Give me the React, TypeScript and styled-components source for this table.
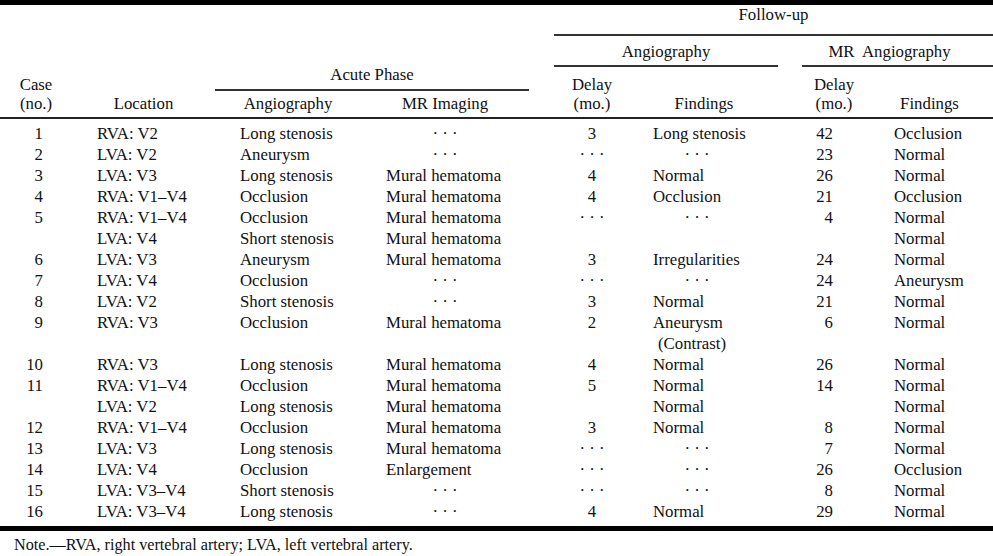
import styled, { createGlobalStyle } from "styled-components";

const COLS = "72px 143px 146px 168px 25px 76px 148px 24px 64px 127px";
const DOTS = "\u00B7 \u00B7 \u00B7";

const GlobalStyle = createGlobalStyle`
  body {
    margin: 0;
    background: #fff;
    color: #111;
    font-family: "Liberation Serif", "Times New Roman", serif;
    font-size: 16.8px;
  }
`;

type Line = {
  c?: string;
  loc?: string;
  aa?: string;
  mr?: string;
  fd?: string;
  ff?: string;
  md?: string;
  mf?: string;
  cont?: boolean;
};

const D = DOTS;

// one entry per printed line, second lines of a case have no case number
const lines: Line[] = [
  { c: "1", loc: "RVA: V2", aa: "Long stenosis", mr: D, fd: "3", ff: "Long stenosis", md: "42", mf: "Occlusion" },
  { c: "2", loc: "LVA: V2", aa: "Aneurysm", mr: D, fd: D, ff: D, md: "23", mf: "Normal" },
  { c: "3", loc: "LVA: V3", aa: "Long stenosis", mr: "Mural hematoma", fd: "4", ff: "Normal", md: "26", mf: "Normal" },
  { c: "4", loc: "RVA: V1–V4", aa: "Occlusion", mr: "Mural hematoma", fd: "4", ff: "Occlusion", md: "21", mf: "Occlusion" },
  { c: "5", loc: "RVA: V1–V4", aa: "Occlusion", mr: "Mural hematoma", fd: D, ff: D, md: "4", mf: "Normal" },
  { loc: "LVA: V4", aa: "Short stenosis", mr: "Mural hematoma", mf: "Normal" },
  { c: "6", loc: "LVA: V3", aa: "Aneurysm", mr: "Mural hematoma", fd: "3", ff: "Irregularities", md: "24", mf: "Normal" },
  { c: "7", loc: "LVA: V4", aa: "Occlusion", mr: D, fd: D, ff: D, md: "24", mf: "Aneurysm" },
  { c: "8", loc: "LVA: V2", aa: "Short stenosis", mr: D, fd: "3", ff: "Normal", md: "21", mf: "Normal" },
  { c: "9", loc: "RVA: V3", aa: "Occlusion", mr: "Mural hematoma", fd: "2", ff: "Aneurysm", md: "6", mf: "Normal" },
  { ff: "(Contrast)", cont: true },
  { c: "10", loc: "RVA: V3", aa: "Long stenosis", mr: "Mural hematoma", fd: "4", ff: "Normal", md: "26", mf: "Normal" },
  { c: "11", loc: "RVA: V1–V4", aa: "Occlusion", mr: "Mural hematoma", fd: "5", ff: "Normal", md: "14", mf: "Normal" },
  { loc: "LVA: V2", aa: "Long stenosis", mr: "Mural hematoma", ff: "Normal", mf: "Normal" },
  { c: "12", loc: "RVA: V1–V4", aa: "Occlusion", mr: "Mural hematoma", fd: "3", ff: "Normal", md: "8", mf: "Normal" },
  { c: "13", loc: "LVA: V3", aa: "Long stenosis", mr: "Mural hematoma", fd: D, ff: D, md: "7", mf: "Normal" },
  { c: "14", loc: "LVA: V4", aa: "Occlusion", mr: "Enlargement", fd: D, ff: D, md: "26", mf: "Occlusion" },
  { c: "15", loc: "LVA: V3–V4", aa: "Short stenosis", mr: D, fd: D, ff: D, md: "8", mf: "Normal" },
  { c: "16", loc: "LVA: V3–V4", aa: "Long stenosis", mr: D, fd: "4", ff: "Normal", md: "29", mf: "Normal" },
];

function App() {
  return (
    <>
      <GlobalStyle />
      <Table>
        <Head>
          <ColHead $col={1}>
            Case
            <br />
            (no.)
          </ColHead>
          <ColHead $col={2}>Location</ColHead>
          <Group $cols="3 / 5">
            <GroupTitle $pb={5}>Acute Phase</GroupTitle>
            <SubCols $tpl="146px 168px">
              <ColHead $pt={3}>Angiography</ColHead>
              <ColHead $pt={3}>MR Imaging</ColHead>
            </SubCols>
          </Group>
          <Group $cols="6 / 11">
            <GroupTitle $pb={10}>Follow-up</GroupTitle>
            <SubCols $tpl="224px 24px 191px">
              <Group>
                <GroupTitle $pt={6} $pb={4}>
                  Angiography
                </GroupTitle>
                <SubCols $tpl="76px 148px">
                  <ColHead $pt={8}>
                    Delay
                    <br />
                    (mo.)
                  </ColHead>
                  <ColHead $pt={8}>Findings</ColHead>
                </SubCols>
              </Group>
              <span />
              <Group>
                <GroupTitle $pt={6} $pb={4} $pr={16}>
                  MR&nbsp; Angiography
                </GroupTitle>
                <SubCols $tpl="64px 127px">
                  <ColHead $pt={8}>
                    Delay
                    <br />
                    (mo.)
                  </ColHead>
                  <ColHead $pt={8}>Findings</ColHead>
                </SubCols>
              </Group>
            </SubCols>
          </Group>
        </Head>
        <Body>
          {lines.map((l, i) => (
            <Row key={i}>
              <Cell $col={1} $align="right" $pr={29}>
                {l.c}
              </Cell>
              <Cell $col={2} $pl={25}>
                {l.loc}
              </Cell>
              <Cell $col={3} $pl={25}>
                {l.aa}
              </Cell>
              {l.mr === D ? (
                <Cell $col={4} $align="center">
                  {l.mr}
                </Cell>
              ) : (
                <Cell $col={4} $pl={25}>
                  {l.mr}
                </Cell>
              )}
              <Cell $col={6} $align="center">
                {l.fd}
              </Cell>
              {l.ff === D ? (
                <Cell $col={7} $align="center" $pr={14}>
                  {l.ff}
                </Cell>
              ) : (
                <Cell $col={7} $pl={l.cont ? 28 : 23}>
                  {l.ff}
                </Cell>
              )}
              <Cell $col={9} $align="right" $pr={33}>
                {l.md}
              </Cell>
              <Cell $col={10} $pl={28}>
                {l.mf}
              </Cell>
            </Row>
          ))}
        </Body>
      </Table>
      <Note>Note.—RVA, right vertebral artery; LVA, left vertebral artery.</Note>
    </>
  );
}

export default App;

const Table = styled.div`
  width: 993px;
  border-top: 5px solid #000;
`;

const Head = styled.div`
  display: grid;
  grid-template-columns: ${COLS};
  align-items: end;
  border-bottom: 2px solid #222;
`;

const ColHead = styled.div<{ $col?: number; $pt?: number }>`
  grid-column: ${(p) => p.$col ?? "auto"};
  text-align: center;
  line-height: 19px;
  padding: ${(p) => p.$pt ?? 0}px 0 4px;
  white-space: nowrap;
`;

const Group = styled.div<{ $cols?: string }>`
  grid-column: ${(p) => p.$cols ?? "auto"};
  display: flex;
  flex-direction: column;
`;

const GroupTitle = styled.div<{ $pt?: number; $pb?: number; $pr?: number }>`
  text-align: center;
  line-height: 19px;
  padding: ${(p) => p.$pt ?? 0}px ${(p) => p.$pr ?? 0}px ${(p) => p.$pb ?? 0}px 0;
  border-bottom: 2px solid #333;
  white-space: nowrap;
`;

const SubCols = styled.div<{ $tpl: string }>`
  display: grid;
  grid-template-columns: ${(p) => p.$tpl};
  align-items: end;
`;

const Body = styled.div`
  padding: 4px 0;
  border-bottom: 5px solid #000;
`;

const Row = styled.div`
  display: grid;
  grid-template-columns: ${COLS};
  height: 21px;
  line-height: 21px;
`;

const Cell = styled.div<{
  $col: number;
  $align?: "left" | "center" | "right";
  $pl?: number;
  $pr?: number;
}>`
  grid-column: ${(p) => p.$col};
  text-align: ${(p) => p.$align ?? "left"};
  padding-left: ${(p) => p.$pl ?? 0}px;
  padding-right: ${(p) => p.$pr ?? 0}px;
  white-space: nowrap;
`;

const Note = styled.p`
  margin: 0;
  padding: 4px 0 0 14px;
  line-height: 21px;
  font-size: 16.2px;
`;
